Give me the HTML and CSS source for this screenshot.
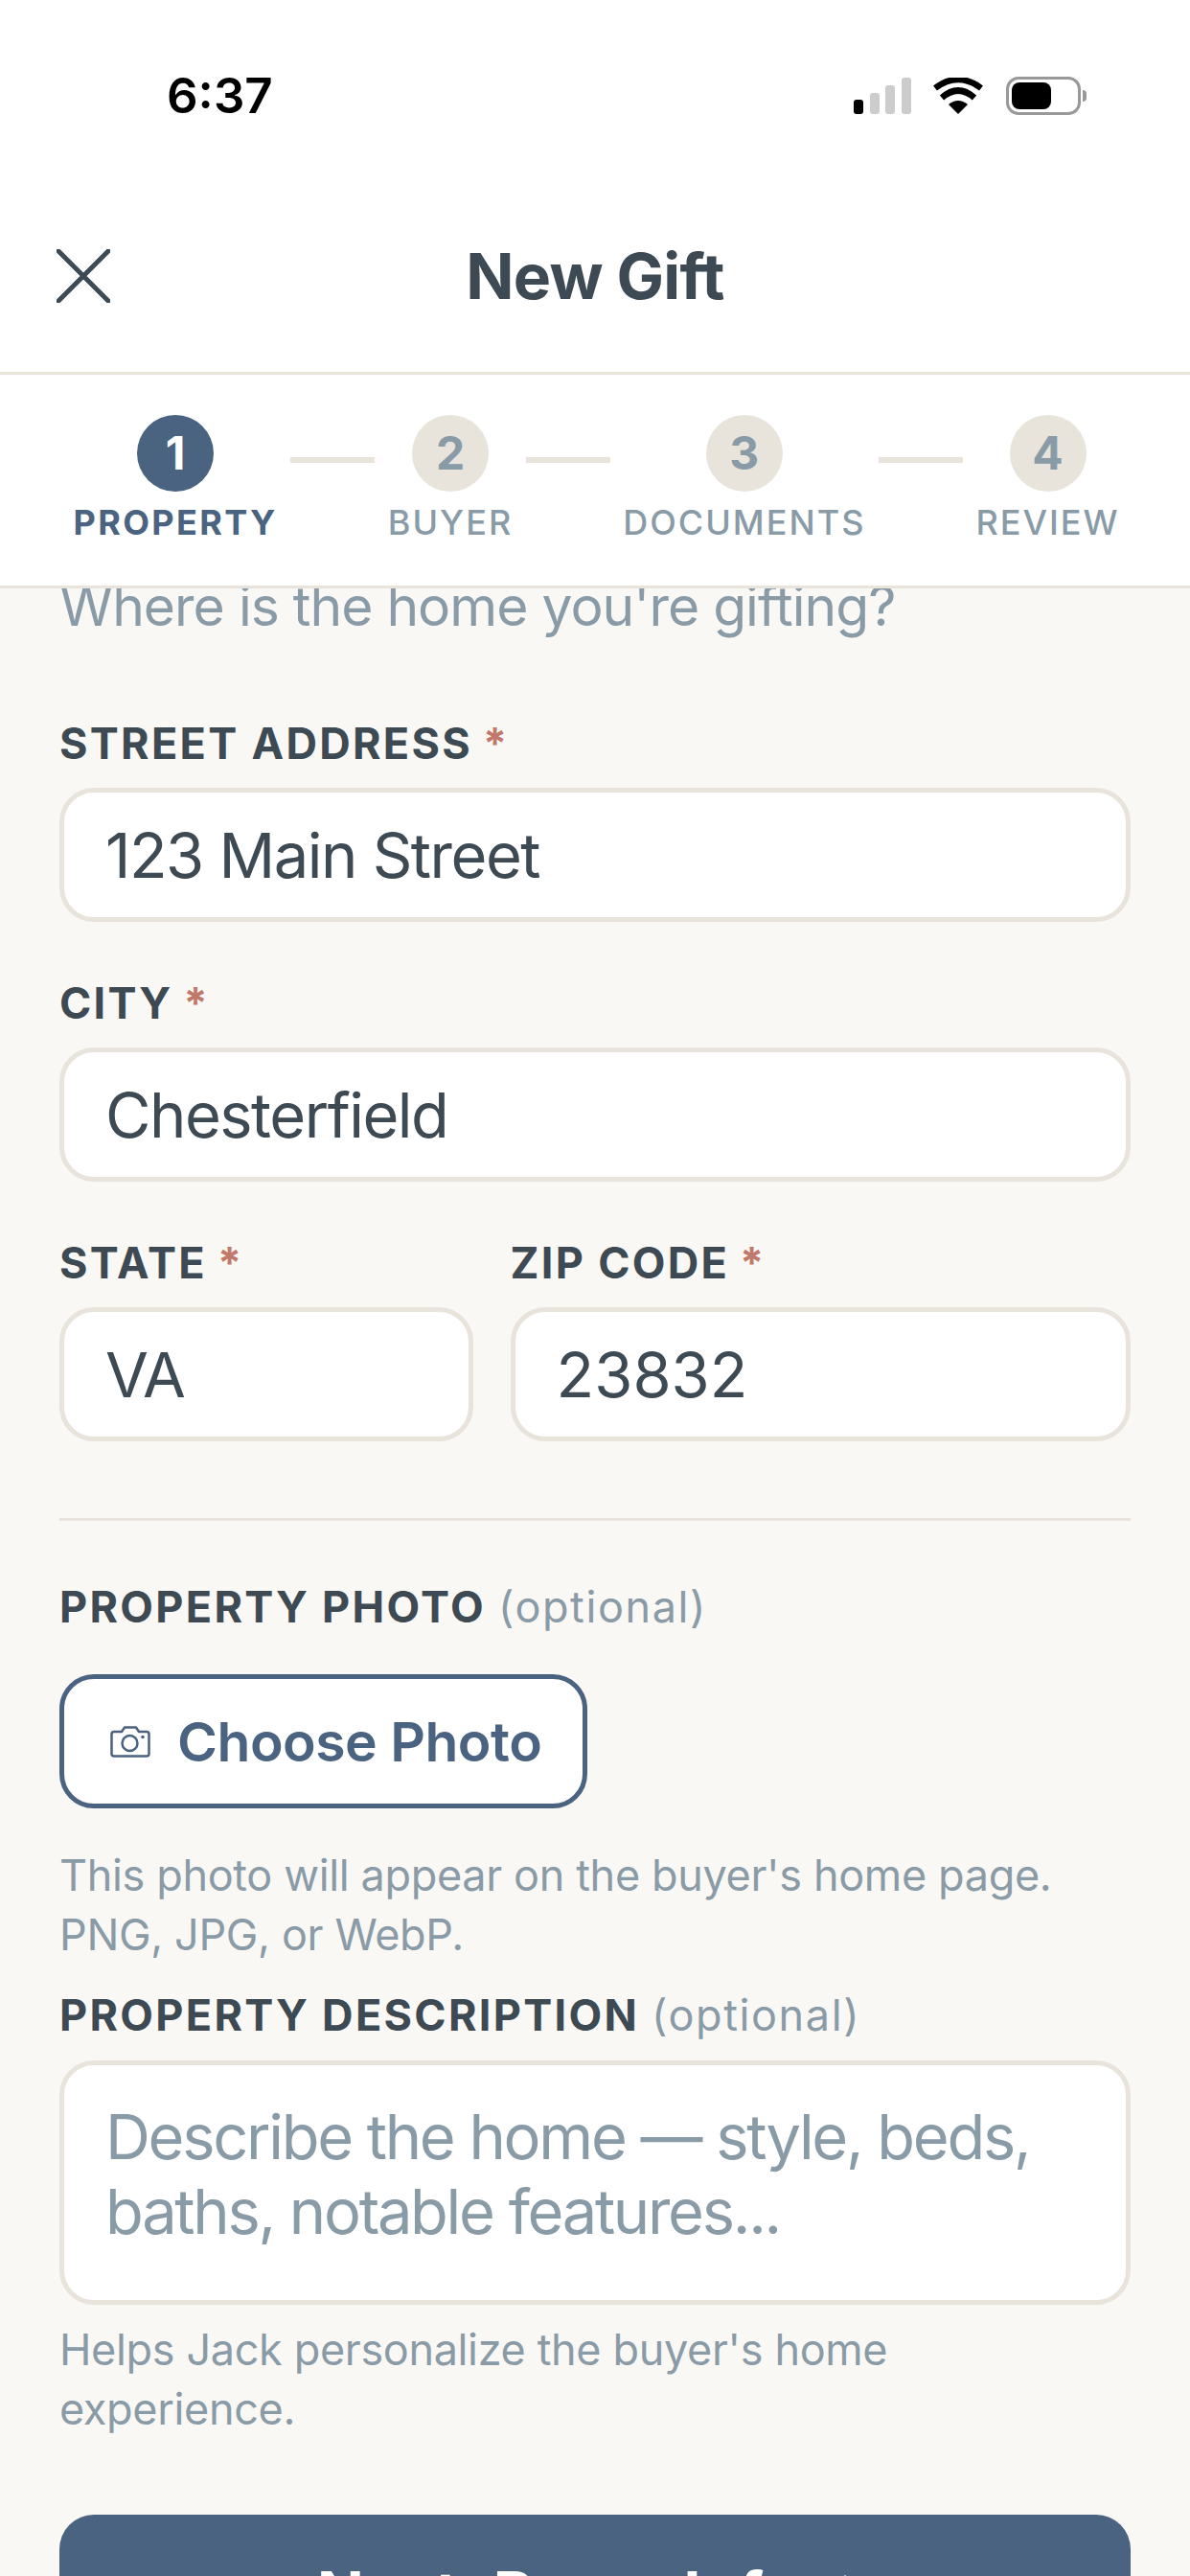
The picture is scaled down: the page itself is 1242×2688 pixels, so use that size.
FILE: index.html
```html
<!DOCTYPE html>
<html lang="en">
<head>
    <meta charset="UTF-8">
    <title>New Gift</title>
    <link rel="stylesheet" href="styles.css">
</head>
<body>
    <div class="screen">
        <div class="status-bar">
            <span class="time">6:37</span>
            <div class="status-icons">
                <svg class="signal" width="60" height="38" viewBox="0 0 60 38">
                    <rect x="0" y="23" width="10" height="15" rx="3" fill="#000"/>
                    <rect x="17" y="16" width="10" height="22" rx="3" fill="#ccc"/>
                    <rect x="33" y="8" width="10" height="30" rx="3" fill="#ccc"/>
                    <rect x="50" y="0" width="10" height="38" rx="3" fill="#ccc"/>
                </svg>
                <svg class="wifi" width="52" height="38" viewBox="0 0 52 38">
                    <path d="M26 38 L16 28 Q26 20 36 28 Z" fill="#000"/>
                    <path d="M9 21 Q26 6 43 21" fill="none" stroke="#000" stroke-width="6.5"/>
                    <path d="M2 11 Q26 -7 50 11" fill="none" stroke="#000" stroke-width="6.5"/>
                </svg>
                <div class="battery">
                    <div class="battery-body"><div class="battery-fill"></div></div>
                    <div class="battery-nub"></div>
                </div>
            </div>
        </div>

        <div class="header">
            <svg class="close" width="56" height="56" viewBox="0 0 56 56">
                <path d="M2 2 L54 54 M54 2 L2 54" fill="none" stroke="#3d4a54" stroke-width="5" stroke-linecap="round"/>
            </svg>
            <h1 class="title">New Gift</h1>
        </div>

        <div class="stepper">
            <div class="step active"><div class="step-num">1</div><div class="step-label">PROPERTY</div></div>
            <div class="step-line"></div>
            <div class="step"><div class="step-num">2</div><div class="step-label">BUYER</div></div>
            <div class="step-line"></div>
            <div class="step"><div class="step-num">3</div><div class="step-label">DOCUMENTS</div></div>
            <div class="step-line"></div>
            <div class="step"><div class="step-num">4</div><div class="step-label">REVIEW</div></div>
        </div>

        <div class="content">
            <p class="subtitle">Where is the home you're gifting?</p>

            <div class="field">
                <div class="label">STREET ADDRESS <span class="req">*</span></div>
                <div class="input">123 Main Street</div>
            </div>
            <div class="field">
                <div class="label">CITY <span class="req">*</span></div>
                <div class="input">Chesterfield</div>
            </div>
            <div class="field-row">
                <div class="field state">
                    <div class="label">STATE <span class="req">*</span></div>
                    <div class="input">VA</div>
                </div>
                <div class="field zip">
                    <div class="label">ZIP CODE <span class="req">*</span></div>
                    <div class="input">23832</div>
                </div>
            </div>

            <div class="divider"></div>

            <div class="label">PROPERTY PHOTO <span class="opt">(optional)</span></div>
            <div class="photo-btn">
                <svg width="42" height="33" viewBox="0 0 42 33">
                    <path d="M4 6 H12 L15 1.5 H27 L30 6 H38 Q40.500 6 40.500 8.500 V29 Q40.500 31.500 38 31.500 H4 Q1.500 31.500 1.500 29 V8.500 Q1.500 6 4 6 Z" fill="none" stroke="#4a6280" stroke-width="2.500" stroke-linejoin="round"/>
                    <circle cx="20.500" cy="18" r="8" fill="none" stroke="#4a6280" stroke-width="2.500"/>
                    <circle cx="34" cy="11.500" r="1.800" fill="#4a6280"/>
                </svg>
                <span>Choose Photo</span>
            </div>
            <p class="hint">This photo will appear on the buyer's home page.<br>PNG, JPG, or WebP.</p>

            <div class="label desc-label">PROPERTY DESCRIPTION <span class="opt">(optional)</span></div>
            <div class="input textarea">Describe the home — style, beds,<br>baths, notable features...</div>
            <p class="hint desc-hint">Helps Jack personalize the buyer's home<br>experience.</p>

            <div class="next-btn">Next: Buyer Info →</div>
        </div>
    </div>
</body>
</html>
```

FILE: styles.css
```css
*{
    padding:0;
    margin:0;
    box-sizing:border-box;
}
html,body{
    height:2688px;
    overflow:hidden;
    background:#fff;
}
.screen{
    width:1242px;
    height:2688px;
    display:flex;
    flex-direction:column;
    overflow:hidden;
    font-family:Inter,"Noto Sans",sans-serif;
    color:#3d4a54;
}
/* status bar */
.status-bar{
    height:190px;
    flex:none;
    display:flex;
    justify-content:space-between;
    padding:74px 108px 0 174px;
}
.time{
    font-size:51px;
    line-height:52px;
    font-weight:600;
    color:#000;
    font-family:Inter,sans-serif;
}
.status-icons{
    display:flex;
    align-items:flex-start;
    padding-top:7px;
}
.wifi{
    margin-left:23px;
}
.battery{
    display:flex;
    align-items:center;
    margin-left:24px;
    margin-top:-1px;
}
.battery-body{
    width:78px;
    height:40px;
    border:3px solid #999;
    border-radius:13px;
    padding:3px;
}
.battery-fill{
    width:41px;
    height:28px;
    background:#000;
    border-radius:8px;
}
.battery-nub{
    width:4px;
    height:12px;
    margin-left:2px;
    background:#999;
    border-radius:0 4px 4px 0;
}
/* header */
.header{
    height:201px;
    flex:none;
    position:relative;
    display:flex;
    align-items:center;
    justify-content:center;
    border-bottom:3px solid #e8e4dc;
    padding-bottom:3px;
}
.close{
    position:absolute;
    left:59px;
    top:70px;
}
.title{
    font-size:66px;
    font-weight:700;
    letter-spacing:-0.8px;
    color:#3d4a54;
}
/* stepper */
.stepper{
    height:223px;
    flex:none;
    display:flex;
    justify-content:center;
    align-items:flex-start;
    gap:13.5px;
    padding:42px 0 0 3px;
    background:#fff;
    border-bottom:3px solid #e8e4dc;
}
.step{
    display:flex;
    flex-direction:column;
    align-items:center;
}
.step-num{
    width:80px;
    height:80px;
    border-radius:50%;
    background:#e8e4dc;
    color:#8a9ba8;
    font-size:48px;
    font-weight:700;
    line-height:80px;
    text-align:center;
}
.step-label{
    margin-top:11px;
    font-size:36px;
    line-height:42px;
    letter-spacing:2px;
    color:#8a9ba8;
    font-weight:500;
}
.step-line{
    width:88px;
    height:6px;
    margin-top:44px;
    background:#e8e4dc;
}
.active .step-num{
    background:#4a6380;
    color:#fff;
}
.active .step-label{
    color:#4a6380;
    font-weight:700;
    letter-spacing:2.4px;
}
/* form */
.content{
    flex:1;
    background:#faf8f5;
    padding:0 62px;
    overflow:hidden;
}
.subtitle{
    font-size:57px;
    line-height:60px;
    letter-spacing:-1px;
    color:#8a9ba8;
    margin-top:-11px;
    margin-bottom:87px;
}
.label{
    font-size:45px;
    line-height:52px;
    font-weight:700;
    letter-spacing:2.3px;
    color:#3d4a54;
}
.req{
    margin-left:-2px;
    color:#c0796a;
}
.opt{
    font-weight:400;
    letter-spacing:1.6px;
    color:#8a9ba8;
}
.field{
    margin-bottom:59px;
}
.field .label{
    margin-bottom:20px;
}
.input{
    height:140px;
    background:#fff;
    border:5px solid #e8e4dc;
    border-radius:36px;
    padding:0 43px;
    display:flex;
    align-items:center;
    font-size:65px;
    letter-spacing:-1.5px;
    color:#3d4a54;
}
.field-row{
    display:flex;
    gap:39px;
}
.state{
    flex:2;
}
.zip{
    flex:3;
}
.zip .input{
    letter-spacing:0;
}
.field-row .field{
    margin-bottom:0;
}
.divider{
    height:3px;
    background:#e8e4dc;
    margin:80px 0 64px;
}
.photo-btn{
    width:551px;
    height:140px;
    margin-top:44px;
    background:#fff;
    border:5px solid #4a6380;
    border-radius:36px;
    display:flex;
    align-items:center;
    gap:28px;
    padding-left:48px;
    font-size:57px;
    letter-spacing:-0.5px;
    font-weight:600;
    color:#4a6380;
}
.hint{
    font-size:45px;
    line-height:62px;
    letter-spacing:-0.35px;
    color:#8a9ba8;
    margin-top:39px;
}
.desc-label{
    margin-top:27px;
    margin-bottom:21px;
}
.textarea{
    height:255px;
    display:block;
    padding:36px 43px 0;
    line-height:78px;
    letter-spacing:-2.3px;
    color:#8a9ba8;
}
.desc-hint{
    margin-top:16px;
}
.next-btn{
    height:140px;
    margin-top:79px;
    padding-top:44px;
    background:#4a6380;
    border-radius:36px;
    color:#fff;
    font-size:64px;
    font-weight:700;
    text-align:center;
}
```
